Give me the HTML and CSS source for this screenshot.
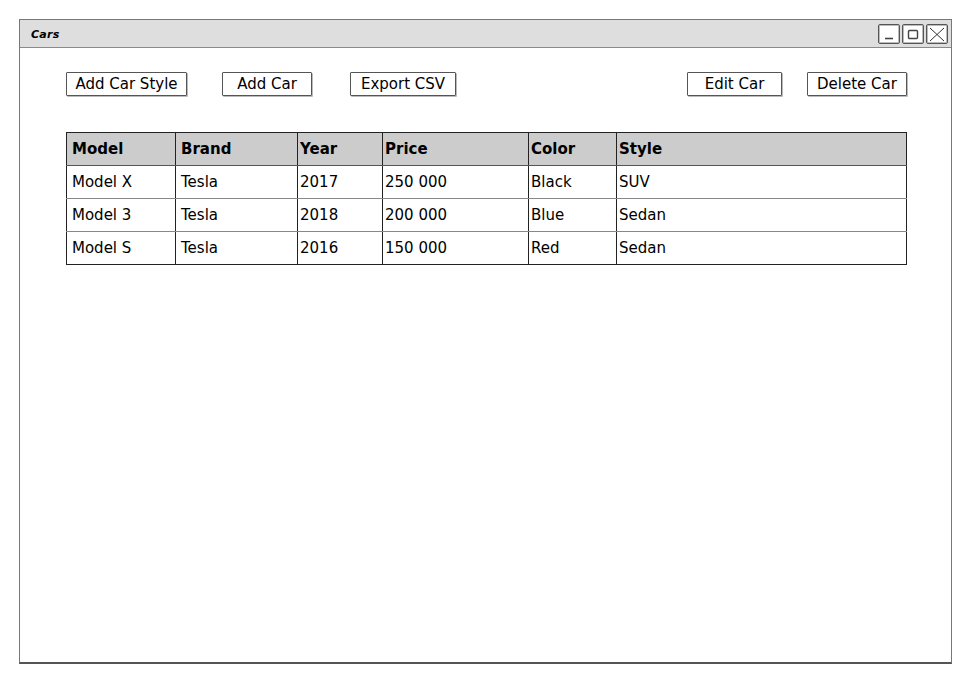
FILE: index.html
```html
<!DOCTYPE html>
<html>
<head>
<meta charset="utf-8">
<link rel="stylesheet" href="styles.css">
</head>
<body>
<div class="window">
  <div class="titlebar">
    <span class="title">Cars</span>
    <div class="controls">
      <span class="ctl"><svg width="18" height="15" viewBox="0 0 18 15"><line x1="5" y1="11.5" x2="13" y2="11.5" stroke="#444" stroke-width="1.6"/></svg></span>
      <span class="ctl"><svg width="18" height="15" viewBox="0 0 18 15"><rect x="4.5" y="3.5" width="9" height="8" rx="1" fill="none" stroke="#444" stroke-width="1.4"/></svg></span>
      <span class="ctl"><svg width="18" height="15" viewBox="0 0 18 15"><path d="M2 1 L16 14 M16 1 L2 14" stroke="#333" stroke-width="1"/></svg></span>
    </div>
  </div>
  <div class="content">
    <div class="toolbar">
      <div class="group left">
        <button class="btn w1">Add Car Style</button>
        <button class="btn w2">Add Car</button>
        <button class="btn w3">Export CSV</button>
      </div>
      <div class="group right">
        <button class="btn w4">Edit Car</button>
        <button class="btn w5">Delete Car</button>
      </div>
    </div>
    <table class="grid">
      <colgroup>
        <col class="c1"><col class="c2"><col class="c3"><col class="c4"><col class="c5"><col class="c6">
      </colgroup>
      <thead>
        <tr><th class="p5">Model</th><th class="p5">Brand</th><th>Year</th><th>Price</th><th>Color</th><th>Style</th></tr>
      </thead>
      <tbody>
        <tr><td class="p5">Model X</td><td class="p5">Tesla</td><td>2017</td><td>250 000</td><td>Black</td><td>SUV</td></tr>
        <tr><td class="p5">Model 3</td><td class="p5">Tesla</td><td>2018</td><td>200 000</td><td>Blue</td><td>Sedan</td></tr>
        <tr><td class="p5">Model S</td><td class="p5">Tesla</td><td>2016</td><td>150 000</td><td>Red</td><td>Sedan</td></tr>
      </tbody>
    </table>
  </div>
</div>
</body>
</html>
```

FILE: styles.css
```css
* { box-sizing: border-box; }
html, body { margin: 0; padding: 0; background: #fff; }
body {
  font-family: "DejaVu Sans", "Liberation Sans", sans-serif;
  color: #000;
  padding: 19px 0 0 19px;
}
.window {
  width: 933px;
  height: 645px;
  border: 1px solid #777;
  border-bottom: 2px solid #555;
  display: flex;
  flex-direction: column;
}
.titlebar {
  height: 28px;
  background: #dedede;
  border-bottom: 1px solid #8a8a8a;
  display: flex;
  align-items: center;
  justify-content: space-between;
  padding: 0 3px 0 11px;
}
.title {
  font-size: 11px;
  font-weight: 600;
  font-style: italic;
  letter-spacing: 0.3px;
  margin-top: 2px;
}
.controls {
  display: flex;
  gap: 2px;
  margin-top: 1px;
}
.ctl {
  width: 22px;
  height: 20px;
  border: 1px solid #555;
  border-radius: 2px;
  background: #fff;
  display: flex;
  align-items: center;
  justify-content: center;
  box-shadow: inset 0 0 0 1px #bbb;
}
.ctl svg { display: block; }
.content {
  padding: 24px 44px 0 46px;
}
.toolbar {
  display: flex;
  justify-content: space-between;
  height: 24px;
}
.group { display: flex; }
.group.left { gap: 35px; }
.group.left .w3 { margin-left: 3px; }
.group.right { gap: 25px; }
.btn {
  font-family: "DejaVu Sans", "Liberation Sans", sans-serif;
  font-size: 15px;
  height: 24px;
  padding: 0;
  background: #fff;
  color: #000;
  border: 1px solid #555;
  border-radius: 1px;
  box-shadow: 1px 1px 0 #bbb;
}
.w1 { width: 121px; }
.w2 { width: 90px; }
.w3 { width: 106px; }
.w4 { width: 95px; }
.w5 { width: 100px; }
.grid {
  margin-top: 36px;
  border-collapse: collapse;
  table-layout: fixed;
  width: 840px;
  font-size: 15px;
  border: 1px solid #222;
}
.c1 { width: 109px; }
.c2 { width: 122px; }
.c3 { width: 85px; }
.c4 { width: 146px; }
.c5 { width: 88px; }
.c6 { width: 290px; }
th, td {
  height: 33px;
  text-align: left;
  padding: 0 2px;
  border-left: 1px solid #222;
  border-bottom: 1px solid #888;
  vertical-align: middle;
}
th {
  background: #cccccc;
  font-weight: bold;
  border-bottom: 1px solid #555;
}
tbody tr:last-child td { border-bottom: 1px solid #222; }
.p5 { padding-left: 5px; }
```
